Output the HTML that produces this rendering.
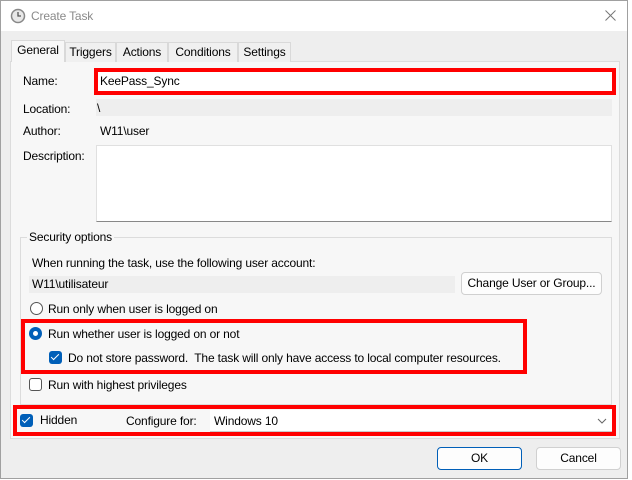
<!DOCTYPE html>
<html><head><style>
*{box-sizing:border-box}
body{margin:0;width:632px;height:480px;background:#fff;font-family:"Liberation Sans",sans-serif;font-size:12px;letter-spacing:-0.15px;color:#000;position:relative;overflow:hidden}
.a{position:absolute}
.t{position:absolute;white-space:nowrap;line-height:14px}
.tab{position:absolute;top:42px;height:20px;border:1px solid #d9d9d9;border-bottom:none;background:#f0f0f0;text-align:center;line-height:19px;font-size:12px}
.red{position:absolute;border:4px solid #ff0000}
.btn{position:absolute;background:#fdfdfd;border:1px solid #d0d0d0;border-radius:4px;text-align:center;line-height:20px}
.cb{position:absolute;width:13px;height:13px;border-radius:3px;background:#005fb8}
.cb:after{content:"";position:absolute;left:4px;top:1px;width:3px;height:7px;border:solid #fff;border-width:0 1.5px 1.5px 0;transform:rotate(45deg)}
</style></head><body>
<div class="a" style="left:0;top:0;width:628px;height:479px;border:1px solid #a0a0a0;background:#eeeeee"></div>
<div class="a" style="left:1px;top:1px;width:626px;height:30px;background:#fff"></div>
<svg class="a" style="left:10px;top:8px" width="16" height="16"><circle cx="8" cy="8" r="6.5" fill="#e8e8e8" stroke="#888" stroke-width="1.5"/><path d="M8 4v4h3" stroke="#555" stroke-width="1.3" fill="none"/></svg>
<div class="t" style="left:31px;top:9px;color:#8a8a8a;font-size:12px">Create Task</div>
<svg class="a" style="left:605px;top:10px" width="11" height="11"><path d="M0.5 0.5L10.5 10.5M10.5 0.5L0.5 10.5" stroke="#777" stroke-width="1"/></svg>
<div class="a" style="left:10px;top:61px;width:610px;height:378px;background:#f7f7f7;border:1px solid #dcdcdc"></div>
<div class="tab" style="left:11px;width:54px;top:40px;height:22px;background:#f7f7f7">General</div>
<div class="tab" style="left:65px;width:51px">Triggers</div>
<div class="tab" style="left:116px;width:52px">Actions</div>
<div class="tab" style="left:168px;width:70px">Conditions</div>
<div class="tab" style="left:238px;width:53px">Settings</div>
<div class="t" style="left:23px;top:74px">Name:</div>
<div class="red" style="left:94px;top:68px;width:522px;height:27px;background:#fff"></div>
<div class="t" style="left:100px;top:74px">KeePass_Sync</div>
<div class="t" style="left:23px;top:102px">Location:</div>
<div class="a" style="left:96px;top:99px;width:516px;height:17px;background:#eeeeee"></div>
<div class="t" style="left:97px;top:101px">\</div>
<div class="t" style="left:23px;top:124px">Author:</div>
<div class="t" style="left:100px;top:124px">W11\user</div>
<div class="t" style="left:23px;top:149px">Description:</div>
<div class="a" style="left:96px;top:145px;width:516px;height:77px;background:#fff;border:1px solid #e0e0e0;border-bottom:1px solid #888"></div>
<div class="a" style="left:20px;top:237px;width:592px;height:168px;border:1px solid #dcdcdc"></div>
<div class="t" style="left:27px;top:230px;background:#f7f7f7;padding:0 2px">Security options</div>
<div class="t" style="left:32px;top:256px">When running the task, use the following user account:</div>
<div class="a" style="left:29px;top:276px;width:426px;height:17px;background:#eeeeee"></div>
<div class="t" style="left:32px;top:277px">W11\utilisateur</div>
<div class="btn" style="left:461px;top:272px;width:141px;height:23px">Change User or Group...</div>
<div class="a" style="left:30px;top:302px;width:13px;height:13px;border-radius:50%;border:1px solid #555;background:#fff"></div>
<div class="t" style="left:48px;top:302px">Run only when user is logged on</div>
<div class="red" style="left:21px;top:319px;width:506px;height:55px"></div>
<div class="a" style="left:29px;top:327px;width:13px;height:13px;border-radius:50%;background:#005fb8"></div>
<div class="a" style="left:33px;top:331px;width:5px;height:5px;border-radius:50%;background:#fff"></div>
<div class="t" style="left:48px;top:327px">Run whether user is logged on or not</div>
<div class="cb" style="left:49px;top:351px"></div>
<div class="t" style="left:68px;top:351px">Do not store password.&nbsp; The task will only have access to local computer resources.</div>
<div class="a" style="left:29px;top:378px;width:13px;height:13px;border-radius:3px;border:1px solid #555;background:#fff"></div>
<div class="t" style="left:48px;top:378px">Run with highest privileges</div>
<div class="red" style="left:13px;top:405px;width:603px;height:31px"></div>
<div class="cb" style="left:20px;top:414px"></div>
<div class="t" style="left:40px;top:413px">Hidden</div>
<div class="t" style="left:126px;top:414px">Configure for:</div>
<div class="a" style="left:210px;top:410px;width:402px;height:22px;background:#fff;border-bottom:1px solid #ccc"></div>
<div class="t" style="left:214px;top:414px">Windows 10</div>
<svg class="a" style="left:597px;top:418px" width="10" height="6"><path d="M1 1l4 4 4-4" stroke="#666" fill="none"/></svg>
<div class="btn" style="left:437px;top:447px;width:85px;height:23px;border-color:#005fb8">OK</div>
<div class="btn" style="left:536px;top:447px;width:85px;height:23px">Cancel</div>
</body></html>
